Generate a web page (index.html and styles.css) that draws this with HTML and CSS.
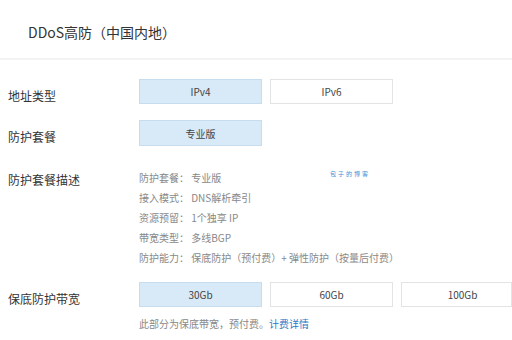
FILE: index.html
```html
<!DOCTYPE html>
<html lang="zh">
<head>
<meta charset="utf-8">
<link rel="stylesheet" href="styles.css">
</head>
<body>
<div class="page">
  <header class="header"><h1 class="title">DDoS高防（中国内地）</h1></header>
  <div class="form">
    <div class="row row-addr">
      <div class="label">地址类型</div>
      <div class="options">
        <div class="opt selected">IPv4</div>
        <div class="opt">IPv6</div>
      </div>
    </div>
    <div class="row row-plan">
      <div class="label">防护套餐</div>
      <div class="options">
        <div class="opt selected">专业版</div>
      </div>
    </div>
    <div class="row row-desc">
      <div class="label label-desc">防护套餐描述</div>
      <ul class="desc">
        <li>防护套餐：&nbsp;专业版</li>
        <li>接入模式：&nbsp;DNS解析牵引</li>
        <li>资源预留：&nbsp;1个独享 IP</li>
        <li>带宽类型：&nbsp;多线BGP</li>
        <li>防护能力：&nbsp;保底防护（预付费）+ 弹性防护（按量后付费）</li>
      </ul>
      <span class="watermark">包子的博客</span>
    </div>
    <div class="row row-bw">
      <div class="label">保底防护带宽</div>
      <div class="options">
        <div class="opt selected">30Gb</div>
        <div class="opt">60Gb</div>
        <div class="opt opt-last">100Gb</div>
      </div>
    </div>
    <p class="note">此部分为保底带宽，预付费。<a class="link">计费详情</a></p>
  </div>
</div>
</body>
</html>
```
FILE: styles.css
```css
* { box-sizing: border-box; }
html, body { margin: 0; padding: 0; background: #fff; }
body {
  width: 512px;
  height: 340px;
  overflow: hidden;
  font-family: "Noto Sans CJK SC", "Liberation Sans", sans-serif;
  color: #333;
}
.page { position: relative; }
.header {
  height: 60px;
  display: flex;
  align-items: center;
  padding: 5px 0 0 28px;
  border-bottom: 2px solid #f3f3f3;
}
.title {
  margin: 0;
  font-size: 14px;
  font-weight: normal;
  color: #333;
}
.form { position: relative; }
.row {
  display: flex;
  align-items: center;
}
.label {
  width: 139px;
  padding: 7px 0 0 8px;
  font-size: 12px;
  color: #333;
  flex-shrink: 0;
}
.options {
  display: flex;
  gap: 8px;
}
.opt {
  width: 123px;
  height: 25px;
  display: flex;
  align-items: center;
  justify-content: center;
  font-size: 10px;
  color: #444;
  background: #fff;
  border: 1px solid #e3e3e3;
  flex-shrink: 0;
}
.opt.selected {
  background: #d8e9f8;
  border-color: #c6dcef;
}
.opt-last {
  width: 111px;
  padding-left: 12px;
}
.row-addr { margin-top: 19px; }
.row-plan { margin-top: 16px; }
.row-plan .opt { height: 26px; }
.row-desc {
  margin-top: 22px;
  align-items: flex-start;
  position: relative;
}
.label-desc { line-height: 20px; padding-top: 2px; }
.desc {
  list-style: none;
  margin: 0;
  padding: 0;
  font-size: 10px;
  line-height: 20px;
  color: #888;
}
.watermark {
  position: absolute;
  left: 330px;
  top: 1px;
  font-size: 6px;
  color: #3a8fd6;
  letter-spacing: 2px;
}
.row-bw { margin-top: 14px; }
.note {
  margin: 8px 0 0 139px;
  font-size: 10px;
  line-height: 18px;
  color: #888;
}
.link { color: #1f7ac9; }
```
